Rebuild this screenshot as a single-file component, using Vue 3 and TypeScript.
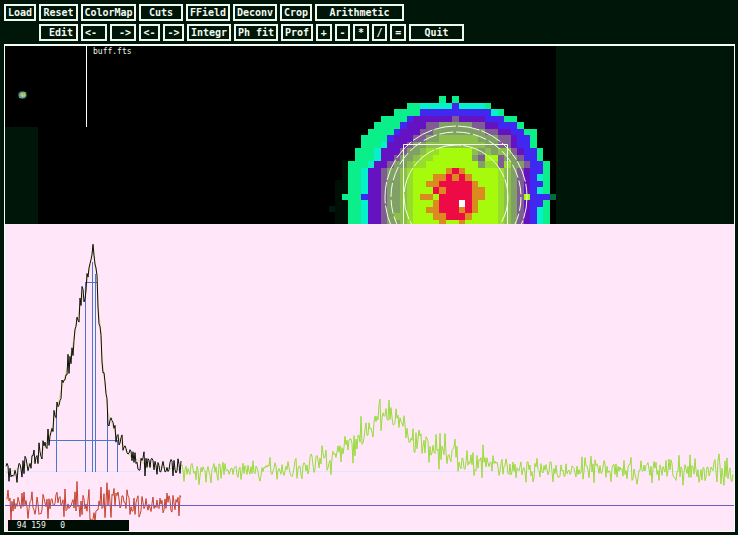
<script setup lang="ts">
import { ref } from 'vue'

interface Command {
  label: string
  size: string
  align?: string
}

interface Cell {
  x: number
  y: number
  fill: string
}

type Point = [number, number]

const mainCommands: Command[] = [
  { label: 'Load', size: 'short' },
  { label: 'Reset', size: 'mid' },
  { label: 'ColorMap', size: 'long' },
  { label: 'Cuts', size: 'regular' },
  { label: 'FField', size: 'regular' },
  { label: 'Deconv', size: 'regular' },
  { label: 'Crop', size: 'short' },
  { label: 'Arithmetic', size: 'wide' },
]

const editCommands: Command[] = [
  { label: 'Edit', size: 'mid', align: 'end' },
  { label: '<-', size: 'step', align: 'start' },
  { label: '->', size: 'step', align: 'end' },
  { label: '<-', size: 'nudge' },
  { label: '->', size: 'nudge' },
  { label: 'Integr', size: 'regular' },
  { label: 'Ph fit', size: 'regular' },
  { label: 'Prof', size: 'short' },
]

const operators = ['+', '-', '*', '/', '=']

const active = ref('')

// Run-length rows of the magnified star, one letter per intensity level.
const starRows = [
  '17.g.g',
  '12.2g5cb4cg',
  '10.4g11bcg',
  '8.4gb6vp4v3b2g',
  '7.4gb3v2p5q2p2v3bg',
  '6.4gb3v2p8q2p2v2b2g',
  '5.4gb3v2p2q6o3q2pv2bg',
  '5.3gc3vp2q9o2q2pv2bg',
  '4.3gc3vp2qo2l5yoqoq2opv2bg',
  '4.3gc2vp2qo2l6yqp2yp2qp2bg',
  '3.3gc2vp2qo2l8yq2lpl2qp2bg',
  '3.2gc2vp2qol5yOrO5yloqpv2bg',
  '3.2gc2vp2qol3y2OrOrO4yloqpvbcg',
  '3.2gc2vp2qol2y2O5rO3yloqpv2bg',
  '3.2gc2vp2qol3yrO4r2O2yloqpvbcg',
  '2.3gb2vp2qoly2Oy5r2O2yloqpyb2bd',
  '3.2gc2vp2qol3yO3rwrO3yloqpv2bg',
  '3.2gc2vp2qol2y2O3rOrO3yloqpvbcg',
  '3.2gc2vpq2ol3y2O3rO4yloqpvbcg',
  '3.2gc2vp2qol4yO2yO5yloqpvbcg',
]

const levels: Record<string, string> = {
  g: '#0bef8a',
  c: '#06f0cc',
  b: '#4128f0',
  v: '#6412c2',
  p: '#7f5c92',
  q: '#80a065',
  o: '#8cc04a',
  l: '#98dd2c',
  y: '#a6fb0c',
  O: '#da8a1e',
  r: '#ee0b45',
  d: '#007038',
  w: '#ffffff',
}

const cellSize = 6.5

const cells: Cell[] = []
starRows.forEach((row, r) => {
  let col = 0
  for (const run of row.matchAll(/(\d*)([a-zA-Z.])/g)) {
    const count = run[1] ? Number(run[1]) : 1
    for (let i = 0; i < count; i++, col++) {
      if (run[2] !== '.') {
        cells.push({ x: 323.5 + col * cellSize, y: 50 + r * cellSize, fill: levels[run[2]] })
      }
    }
  }
})

function makeNoise(seed: number): () => number {
  let state = seed
  const uniform = () => {
    state = (state * 16807) % 2147483647
    return state / 2147483647
  }
  return () => uniform() + uniform() + uniform() - 1.5
}

function levelAt(shape: Point[], x: number): number {
  for (let i = 1; i < shape.length; i++) {
    const [x0, y0] = shape[i - 1]
    const [x1, y1] = shape[i]
    if (x <= x1) return y0 + ((y1 - y0) * (x - x0)) / (x1 - x0)
  }
  return shape[shape.length - 1][1]
}

function trace(shape: Point[], amplitude: (x: number) => number, seed: number): string {
  const noise = makeNoise(seed)
  const points: string[] = []
  for (let x = shape[0][0]; x <= shape[shape.length - 1][0]; x++) {
    points.push(`${x},${(levelAt(shape, x) + noise() * amplitude(x)).toFixed(1)}`)
  }
  return points.join(' ')
}

const peakShape: Point[] = [
  [1, 249], [15, 244], [28, 238], [35, 231], [42, 219], [47, 204], [52, 186], [55, 171], [58, 160],
  [67, 125], [71, 102], [75, 82], [82, 58], [85, 42], [88, 22], [90, 42], [92, 52], [93, 81], [96, 108],
  [97, 134], [100, 160], [103, 189], [110, 208], [117, 220], [125, 232], [142, 241], [176, 246],
]

const spectrumShape: Point[] = [
  [176, 246], [230, 248], [295, 243], [325, 236], [340, 226], [355, 215], [367, 202], [376, 190],
  [385, 190], [395, 200], [405, 212], [420, 220], [435, 227], [455, 234], [475, 239], [515, 245], [728, 247],
]

const residualShape: Point[] = [[2, 281], [176, 281]]

const peakTrace = trace(peakShape, (x) => (x > 82 && x < 94 ? 4 : x > 52 && x < 104 ? 13 : 12), 417)
const fitTrace = peakShape.map((p) => p.join(',')).join(' ')
const spectrumTrace = trace(spectrumShape, (x) => (x > 330 && x < 480 ? 16 : 13), 9241)
const residualTrace = trace(residualShape, (x) => (x > 70 && x < 125 ? 23 : 14), 5573)
</script>

<template>
  <main class="app">
    <nav class="toolbar" aria-label="Commands">
      <div class="row">
        <button
          v-for="c in mainCommands"
          :key="c.label"
          type="button"
          :class="['cmd', c.size]"
          @click="active = c.label"
        >{{ c.label }}</button>
      </div>
      <div class="row second">
        <button
          v-for="(c, i) in editCommands"
          :key="i"
          type="button"
          :class="['cmd', c.size, c.align]"
          @click="active = c.label"
        >{{ c.label }}</button>
        <div class="operators">
          <button
            v-for="o in operators"
            :key="o"
            type="button"
            class="cmd op"
            @click="active = o"
          >{{ o }}</button>
        </div>
        <button type="button" class="cmd long" @click="active = 'Quit'">Quit</button>
      </div>
    </nav>

    <section class="frame">
      <div class="image">
        <svg class="art" viewBox="0 0 729 178" aria-hidden="true">
          <rect width="551" height="178" fill="#000" />
          <rect y="81" width="33" height="97" fill="#001609" />
          <g shape-rendering="crispEdges">
            <rect x="324" y="160" width="7" height="6" fill="#00190c" />
            <path d="M330 134h7v-20h6v64h-13z" fill="#000f05" />
            <rect
              v-for="(cell, i) in cells"
              :key="i"
              :x="cell.x"
              :y="cell.y"
              width="6.5"
              height="6.5"
              :fill="cell.fill"
            />
          </g>
          <g fill="none" stroke="#f2ffe6">
            <circle cx="451" cy="151" r="71" stroke-dasharray="22 2" />
            <circle cx="451" cy="151" r="65" stroke-dasharray="14 3" />
            <circle cx="451" cy="151" r="52" stroke-dasharray="26 2" />
            <path d="M398.500 178V98.500H502.500V178" />
            <path d="M81.500 0V81" stroke="#fff" />
          </g>
          <g>
            <ellipse cx="17.500" cy="49" rx="4.500" ry="4" fill="#245f6c" />
            <ellipse cx="17.500" cy="49" rx="3.500" ry="3" fill="#7f9a90" />
            <ellipse cx="18" cy="49" rx="2.500" ry="2" fill="#c0d060" />
            <path d="M18 48h1v1h-1z" fill="#c88a3a" />
            <path d="M19 46h2v1h-2zM14 51h2v1h-2z" fill="#2fc08a" />
          </g>
        </svg>
        <span class="file">buff.fts</span>
      </div>

      <div class="plot">
        <svg class="art" viewBox="0 0 729 307" role="img" aria-label="Spectrum profile with fitted peak and residuals">
          <rect width="729" height="307" fill="#ffe6f8" />
          <g fill="none">
            <path d="M0 247.500H729" stroke="#dce6ff" />
            <polyline :points="fitTrace" stroke="#e2dc88" />
            <polyline :points="spectrumTrace" stroke="#99dc3d" />
            <g stroke="#4a77cc" shape-rendering="crispEdges">
              <path d="M51.500 186V248M80.500 58V248M87.500 38V248M90.500 50V248M102.500 186V248M112.500 216V248" />
              <path d="M44 216.500H113M80 58.500H92" />
            </g>
            <polyline :points="peakTrace" stroke="#0b1108" />
            <polyline :points="residualTrace" stroke="#c4432f" />
            <path d="M0 281.500H729" stroke="#6a60bc" />
          </g>
        </svg>
        <output class="status">&nbsp;94 159&nbsp;&nbsp;&nbsp;0</output>
      </div>
    </section>
  </main>
</template>

<style>
body {
  background: #001609;
}
</style>

<style scoped>
.app {
  box-sizing: border-box;
  padding: 4px 3px 3px 4px;
  background: #001609;
  color: #f0faf0;
  font-family: "DejaVu Sans Mono", "Liberation Mono", monospace;
}

.toolbar {
  display: flex;
  flex-direction: column;
  gap: 3px;
  margin-bottom: 3px;
}

.row {
  display: flex;
  gap: 3px;
}

.second {
  padding-left: 35px;
}

.cmd {
  box-sizing: border-box;
  display: flex;
  align-items: center;
  justify-content: center;
  flex: none;
  height: 17px;
  margin: 0;
  padding: 0;
  border: 2px solid #eefaf0;
  border-radius: 0;
  background: #001609;
  color: inherit;
  font-family: inherit;
  font-size: 10px;
  font-weight: bold;
  line-height: 12px;
  white-space: pre;
}

.short { width: 32px; }
.mid { width: 39px; }
.regular { width: 44px; }
.long { width: 55px; }
.wide { width: 89px; }
.step { width: 26px; }
.nudge { width: 21px; }

.start {
  justify-content: flex-start;
  padding-left: 2px;
}

.end {
  justify-content: flex-end;
  padding-right: 3px;
}

.operators {
  display: flex;
  gap: 3px;
  width: 90px;
}

.op {
  flex: 1;
}

.frame {
  border: 1px solid #f4fff6;
  border-top-width: 2px;
}

.image,
.plot {
  position: relative;
}

.art {
  display: block;
  width: 100%;
  height: auto;
}

.file {
  position: absolute;
  top: 0;
  left: 88px;
  font-size: 8px;
  line-height: 12px;
}

.status {
  position: absolute;
  bottom: 0;
  left: 3px;
  box-sizing: border-box;
  width: 121px;
  padding-left: 4px;
  background: #000d05;
  font-size: 8px;
  line-height: 11px;
}
</style>
